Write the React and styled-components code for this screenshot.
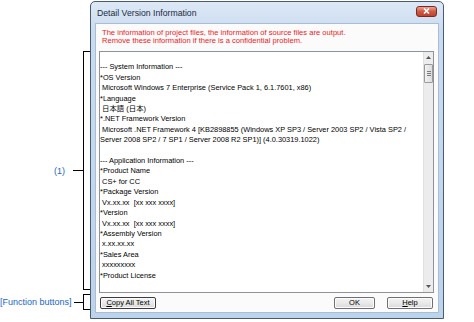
import React from "react";
import styled, { createGlobalStyle } from "styled-components";

const Global = createGlobalStyle`
  html, body { margin: 0; padding: 0; background: #ffffff; }
  body { width: 474px; height: 322px; overflow: hidden; font-family: "Liberation Sans", "Noto Sans CJK JP", sans-serif; }
`;

const Page = styled.div`
  display: flex;
  align-items: flex-start;
  padding-top: 1px;
`;

const Annotations = styled.div`
  width: 90px;
  flex: none;
  display: flex;
  flex-direction: column;
  padding-top: 50px;
`;

const AnnotRow = styled.div`
  display: flex;
  align-items: center;
  justify-content: flex-end;
  height: ${(p) => p.$h}px;
  margin-top: ${(p) => p.$mt || 0}px;
`;

const Label = styled.span`
  font-family: "Liberation Sans", sans-serif;
  font-size: 9px;
  color: #2167c2;
  margin-right: ${(p) => p.$gap}px;
  white-space: nowrap;
`;

const Tick = styled.div`
  width: 10px;
  height: 1px;
  background: #000;
`;

const Bracket = styled.div`
  width: 6px;
  align-self: stretch;
  border: 1px solid #000;
  border-right: none;
`;

const Window = styled.div`
  flex: none;
  width: 344px;
  height: 311px;
  border: 1px solid #4a5a70;
  border-radius: 5px 5px 0 0;
  background: linear-gradient(#dde8f5, #c9dbf0 30px, #bcd3ec);
  display: flex;
  flex-direction: column;
  padding: 0 4px 5px 4px;
  box-sizing: content-box;
`;

const TitleBar = styled.div`
  height: 21px;
  flex: none;
  display: flex;
  align-items: center;
  justify-content: space-between;
  padding: 0 2px;
`;

const Title = styled.span`
  font-size: 8.7px;
  color: #1b2b40;
`;

const CloseBtn = styled.div`
  width: 19px;
  height: 9px;
  border: 1px solid #7a2a22;
  border-radius: 3px;
  background: linear-gradient(#e8a493, #cf5a44 50%, #c2412b);
  display: flex;
  align-items: center;
  justify-content: center;
  margin-top: -3px;
`;

const Client = styled.div`
  flex: 1;
  background: #fbfbfb;
  border: 1px solid #a9bdd3;
  display: flex;
  flex-direction: column;
  padding: 0 4px 0 3px;
`;

const Notice = styled.div`
  color: #f01818;
  font-size: 7.6px;
  line-height: 7.6px;
  padding: 5px 0 0 3px;
  height: 22px;
  white-space: nowrap;
`;

const TextBox = styled.div`
  height: 240px;
  border: 1px solid #8e9399;
  background: #fff;
  display: flex;
`;

const TextArea = styled.pre`
  flex: 1;
  margin: 0;
  padding: 0;
  font-family: "Liberation Sans", "Noto Sans CJK JP", sans-serif;
  font-size: 7.4px;
  line-height: 10.4px;
  color: #000;
  white-space: pre;
  overflow: hidden;
`;

const Scrollbar = styled.div`
  width: 9px;
  background: #ececec;
  border-left: 1px solid #e0e0e0;
  display: flex;
  flex-direction: column;
  align-items: stretch;
`;

const ScrollArrow = styled.div`
  height: 11px;
  display: flex;
  align-items: center;
  justify-content: center;
  margin-top: ${(p) => (p.$bottom ? "auto" : "0")};
`;

const Thumb = styled.div`
  height: 17px;
  margin: 1px 0 0 0;
  border: 1px solid #9a9a9a;
  border-radius: 1px;
  background: linear-gradient(90deg, #f2f2f2, #dcdcdc);
  display: flex;
  flex-direction: column;
  align-items: center;
  justify-content: center;
  gap: 1px;
`;

const Grip = styled.div`
  width: 4px;
  height: 1px;
  background: #7b7b7b;
`;

const ButtonRow = styled.div`
  display: flex;
  align-items: center;
  margin-top: 4px;
`;

const Button = styled.div`
  width: ${(p) => p.$w}px;
  height: 10px;
  border: 1px solid ${(p) => (p.$focus ? "#3c3c3c" : "#707070")};
  border-radius: 2px;
  background: linear-gradient(#f4f4f4, #e9e9e9 50%, #d9d9d9);
  font-size: 7.5px;
  line-height: 10px;
  text-align: center;
  color: #000;
  margin-left: ${(p) => p.$ml || 0}px;
  box-shadow: inset 0 0 0 1px #fcfcfc;
  u { text-decoration: underline; }
`;

const text = `
--- System Information ---
*OS Version
 Microsoft Windows 7 Enterprise (Service Pack 1, 6.1.7601, x86)
*Language
 日本語 (日本)
*.NET Framework Version
 Microsoft .NET Framework 4 [KB2898855 (Windows XP SP3 / Server 2003 SP2 / Vista SP2 /
Server 2008 SP2 / 7 SP1 / Server 2008 R2 SP1)] (4.0.30319.1022)

--- Application Information ---
*Product Name
 CS+ for CC
*Package Version
 Vx.xx.xx  [xx xxx xxxx]
*Version
 Vx.xx.xx  [xx xxx xxxx]
*Assembly Version
 x.xx.xx.xx
*Sales Area
 xxxxxxxxx
*Product License`;

export default function App() {
  return (
    <>
      <Global />
      <Page>
        <Annotations>
          <AnnotRow $h={239}>
            <Label $gap={8}>(1)</Label>
            <Tick />
            <Bracket />
          </AnnotRow>
          <AnnotRow $h={16} $mt={4}>
            <Label $gap={2}>[Function buttons]</Label>
            <Tick />
            <Bracket />
          </AnnotRow>
        </Annotations>
        <Window>
          <TitleBar>
            <Title>Detail Version Information</Title>
            <CloseBtn>
              <svg width="7" height="6" viewBox="0 0 7 6">
                <path d="M1 0.5 L6 5.5 M6 0.5 L1 5.5" stroke="#fff" strokeWidth="1.6" />
              </svg>
            </CloseBtn>
          </TitleBar>
          <Client>
            <Notice>
              The information of project files, the information of source files are output.
              <br />
              Remove these information if there is a confidential problem.
            </Notice>
            <TextBox>
              <TextArea>{text}</TextArea>
              <Scrollbar>
                <ScrollArrow>
                  <svg width="5" height="3" viewBox="0 0 5 3"><path d="M0 3 L2.5 0 L5 3Z" fill="#555" /></svg>
                </ScrollArrow>
                <Thumb>
                  <Grip />
                  <Grip />
                  <Grip />
                </Thumb>
                <ScrollArrow $bottom>
                  <svg width="5" height="3" viewBox="0 0 5 3"><path d="M0 0 L2.5 3 L5 0Z" fill="#555" /></svg>
                </ScrollArrow>
              </Scrollbar>
            </TextBox>
            <ButtonRow>
              <Button $w={54} $ml={1} $focus>
                <u>C</u>opy All Text
              </Button>
              <Button $w={39} $ml={178}>OK</Button>
              <Button $w={44} $ml={12}>
                <u>H</u>elp
              </Button>
            </ButtonRow>
          </Client>
        </Window>
      </Page>
    </>
  );
}
